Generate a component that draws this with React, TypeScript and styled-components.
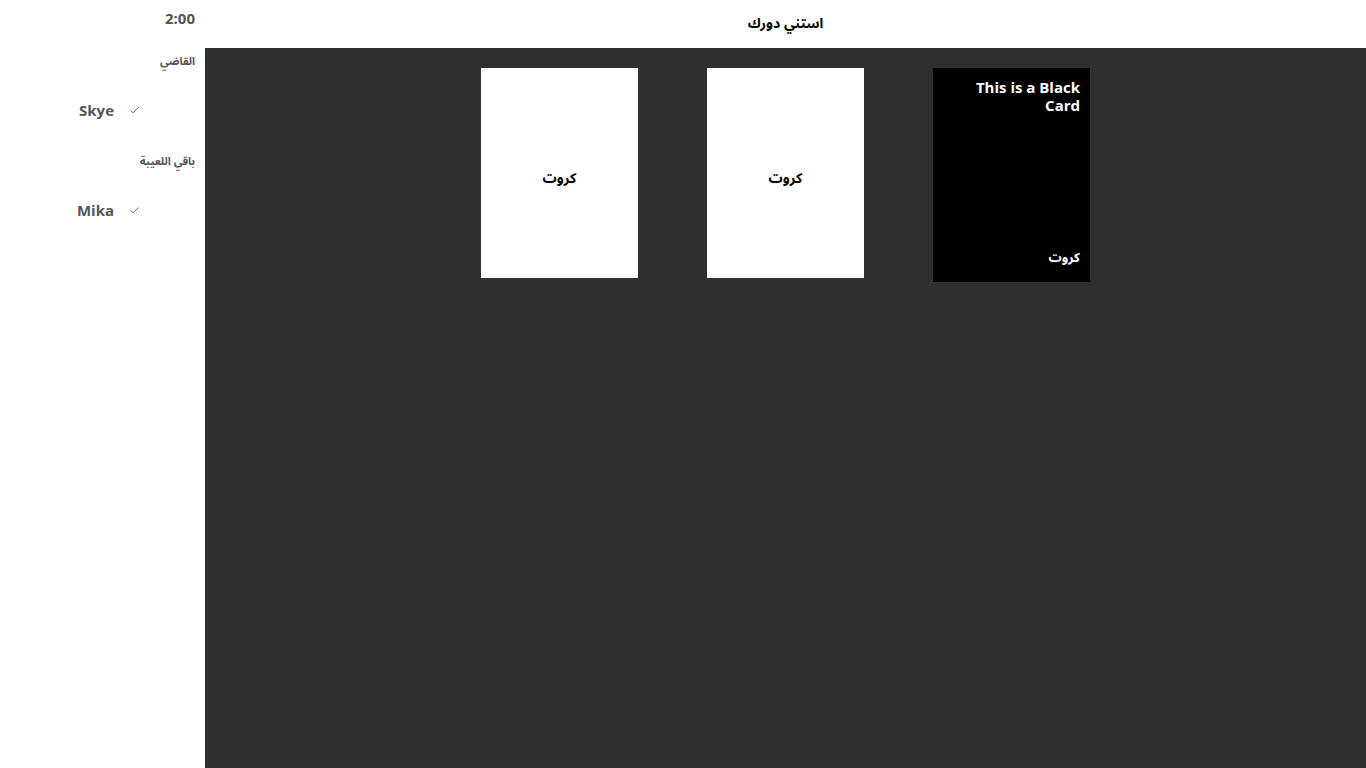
import React from "react";
import styled, { createGlobalStyle } from "styled-components";

const arabic = `"Noto Sans Arabic", "Noto Sans", "DejaVu Sans", sans-serif`;

const Global = createGlobalStyle`
  html, body { margin: 0; padding: 0; background: #ffffff; }
  body { font-family: "Open Sans", "Noto Sans Arabic", "DejaVu Sans", sans-serif; }
  * { box-sizing: border-box; }
`;

const Layout = styled.div`
  display: grid;
  grid-template-columns: 205px 1fr;
  grid-template-rows: 48px 1fr;
  width: 100vw;
  height: 100vh;
`;

const Sidebar = styled.aside`
  grid-row: 1 / span 2;
  grid-column: 1;
  background: #ffffff;
  display: flex;
  flex-direction: column;
  align-items: stretch;
  padding: 8px 10px 0 0;
  color: #555555;
`;

const Timer = styled.div`
  text-align: right;
  font-size: 15px;
  font-weight: 700;
  line-height: 20px;
  height: 20px;
`;

const SectionLabel = styled.div<{ $top: number }>`
  direction: rtl;
  text-align: right;
  font-size: 11px;
  font-weight: 700;
  line-height: 16px;
  margin-top: ${(p) => p.$top}px;
  font-family: ${arabic};
`;

const PlayerRow = styled.div`
  display: flex;
  justify-content: flex-end;
  align-items: center;
  gap: 15px;
  padding-right: 55px;
  margin-top: 30px;
  height: 20px;
  font-size: 15px;
  font-weight: 700;
`;

const CheckMark = styled.svg`
  width: 11px;
  height: 11px;
  color: #555555;
`;

const Header = styled.header`
  grid-row: 1;
  grid-column: 2;
  display: flex;
  align-items: center;
  justify-content: center;
  background: #ffffff;
  direction: rtl;
  font-family: ${arabic};
  font-size: 14px;
  font-weight: 700;
  color: #000000;
  padding-bottom: 2px;
`;

const Board = styled.main`
  grid-row: 2;
  grid-column: 2;
  background: #2f2f2f;
  display: flex;
  justify-content: center;
  align-items: flex-start;
  gap: 69px;
  padding-top: 20px;
`;

const WhiteCard = styled.div`
  width: 157px;
  height: 210px;
  background: #ffffff;
  color: #000000;
  display: flex;
  align-items: center;
  justify-content: center;
  padding-top: 10px;
  direction: rtl;
  font-family: ${arabic};
  font-size: 14px;
  font-weight: 700;
`;

const BlackCard = styled.div`
  width: 157px;
  height: 214px;
  background: #000000;
  color: #ffffff;
  display: flex;
  flex-direction: column;
  justify-content: space-between;
  padding: 10px 10px 10px 10px;
  text-align: right;
`;

const Prompt = styled.div`
  font-size: 15px;
  font-weight: 700;
  line-height: 18px;
`;

const CardFooter = styled.div`
  direction: rtl;
  text-align: right;
  font-family: ${arabic};
  font-size: 13px;
  font-weight: 700;
`;

const Check = () => (
  <CheckMark viewBox="0 0 24 24" fill="none" stroke="currentColor" strokeWidth={2} strokeLinecap="round" strokeLinejoin="round">
    <path d="M20 6 9 17l-5-5" />
  </CheckMark>
);

export default function App() {
  return (
    <>
      <Global />
      <Layout>
        <Sidebar>
          <Timer>2:00</Timer>
          <SectionLabel $top={26}>القاضي</SectionLabel>
          <PlayerRow>
            <span>Skye</span>
            <Check />
          </PlayerRow>
          <SectionLabel $top={34}>باقي اللعيبة</SectionLabel>
          <PlayerRow>
            <span>Mika</span>
            <Check />
          </PlayerRow>
        </Sidebar>
        <Header>استني دورك</Header>
        <Board>
          <WhiteCard>كروت</WhiteCard>
          <WhiteCard>كروت</WhiteCard>
          <BlackCard>
            <Prompt>This is a Black Card</Prompt>
            <CardFooter>كروت</CardFooter>
          </BlackCard>
        </Board>
      </Layout>
    </>
  );
}
